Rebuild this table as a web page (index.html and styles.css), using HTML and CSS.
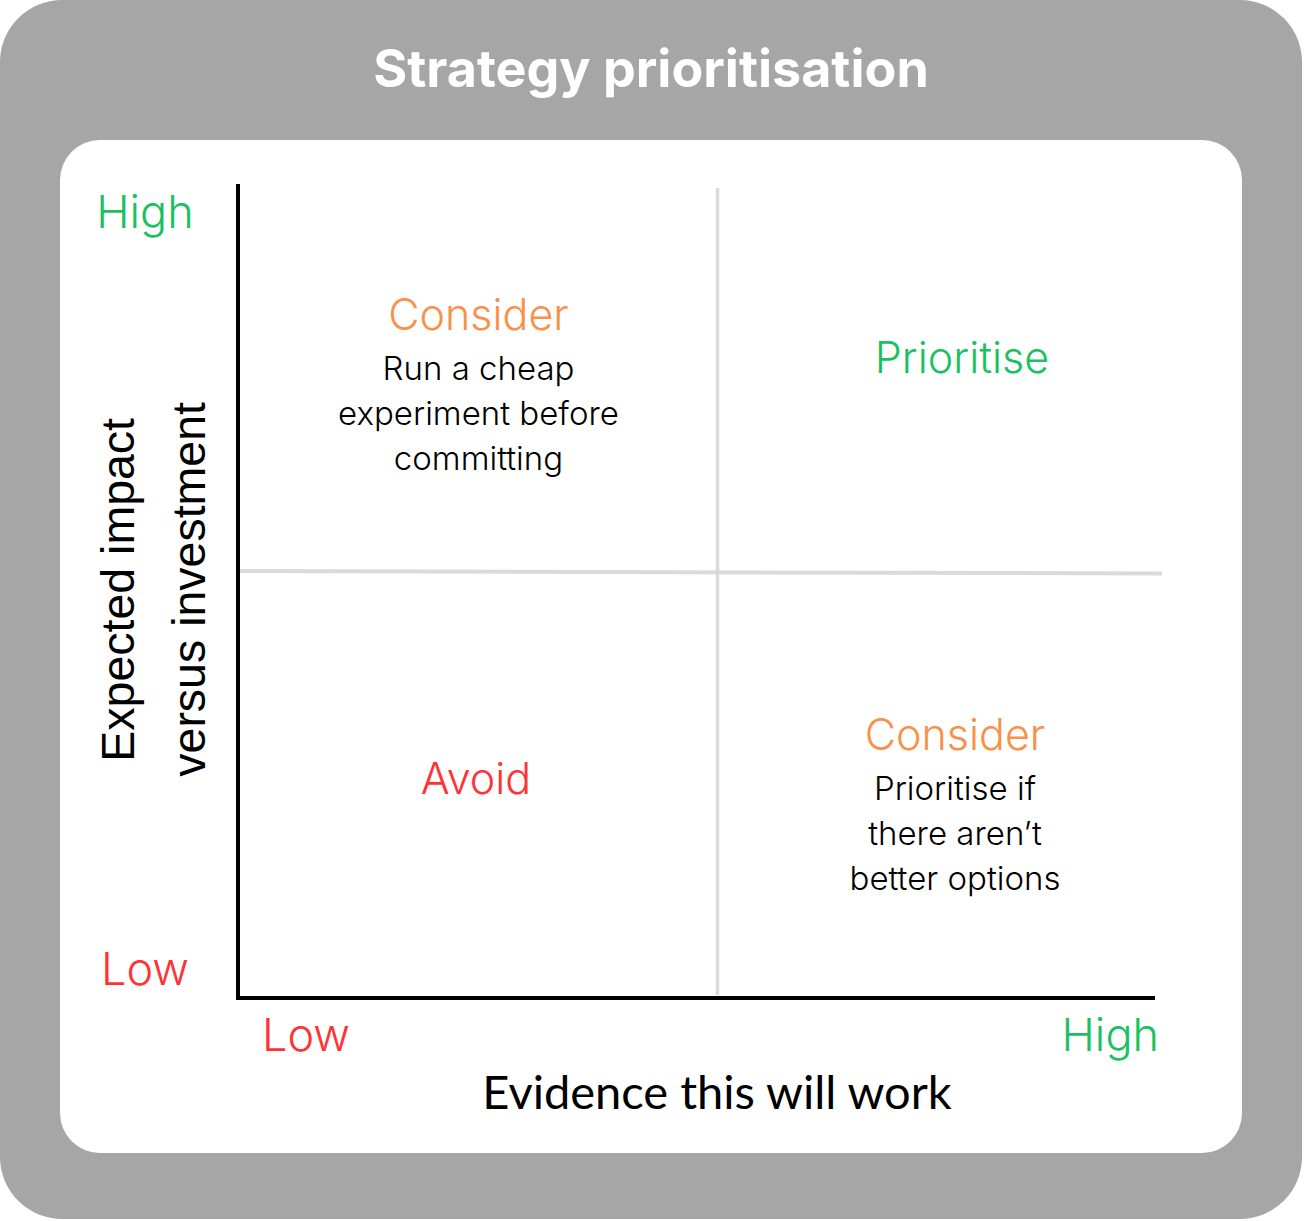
FILE: index.html
```html
<!DOCTYPE html>
<html lang="en">
<head>
<meta charset="utf-8">
<title>Strategy prioritisation</title>
<link rel="stylesheet" href="styles.css">
</head>
<body>
<div class="frame">
  <h1 class="title">Strategy prioritisation</h1>
  <div class="card">
    <div class="plot-row">
      <div class="y-side">
        <div class="lvl high y-high">High</div>
        <div class="y-label">
          <div class="y-text">
            <div class="y-line">Expected impact</div>
            <div class="y-line">versus investment</div>
          </div>
        </div>
        <div class="lvl low y-low">Low</div>
      </div>
      <div class="chart">
        <svg class="grid-lines" width="930" height="816" viewBox="0 0 930 816" aria-hidden="true">
          <line x1="477.5" y1="4" x2="477.5" y2="811" stroke="#dadada" stroke-width="3.5"/>
          <line x1="0" y1="387" x2="922" y2="389.5" stroke="#dadada" stroke-width="4"/>
        </svg>
        <div class="quad tl">
          <div class="q-head consider">Consider</div>
          <div class="q-sub">Run a cheap<br>experiment before<br>committing</div>
        </div>
        <div class="quad tr">
          <div class="q-head prioritise">Prioritise</div>
        </div>
        <div class="quad bl">
          <div class="q-head avoid">Avoid</div>
        </div>
        <div class="quad br">
          <div class="q-head consider">Consider</div>
          <div class="q-sub">Prioritise if<br>there aren’t<br>better options</div>
        </div>
      </div>
    </div>
    <div class="x-levels">
      <span class="lvl low">Low</span>
      <span class="lvl high">High</span>
    </div>
    <div class="x-label">Evidence this will work</div>
  </div>
</div>
</body>
</html>
```

FILE: styles.css
```css
html, body {
  margin: 0;
  padding: 0;
  background: #ffffff;
}

.frame {
  width: 1302px;
  height: 1219px;
  background: #a6a6a6;
  border-radius: 62px;
  box-sizing: border-box;
  padding: 0 60px;
  font-family: Inter, "Noto Sans", sans-serif;
}

.title {
  margin: 0;
  height: 140px;
  line-height: 137px;
  text-align: center;
  color: #ffffff;
  font-family: Inter, "Noto Sans", sans-serif;
  font-weight: 700;
  font-size: 52px;
}

.card {
  width: 1182px;
  height: 1013px;
  background: #ffffff;
  border-radius: 40px;
  box-sizing: border-box;
  padding-top: 44px;
}

.plot-row {
  display: flex;
}

.y-side {
  width: 176px;
  height: 816px;
  box-sizing: border-box;
  padding-right: 6px;
  display: flex;
  flex-direction: column;
  align-items: center;
}

.lvl {
  font-family: Inter, "Noto Sans", sans-serif;
  font-weight: 300;
  font-size: 45px;
  line-height: 45px;
}

.high { color: #19c160; }
.low { color: #fe3434; }

.y-high { margin-top: 5px; }
.y-low { margin-bottom: 9px; }

.y-label {
  flex: 1;
  display: flex;
  align-items: center;
  justify-content: center;
}

.y-text {
  writing-mode: vertical-rl;
  transform: rotate(180deg);
  font-family: "Liberation Sans", Arial, sans-serif;
  font-size: 46.5px;
  line-height: 71px;
  color: #000000;
  text-align: center;
  margin-left: 17px;
  margin-top: -2px;
  white-space: nowrap;
}

.chart {
  position: relative;
  width: 919px;
  height: 816px;
  box-sizing: border-box;
  border-left: 4px solid #000000;
  border-bottom: 4px solid #000000;
  display: grid;
  grid-template-columns: 477px 1fr;
  grid-template-rows: 387px 1fr;
}

.grid-lines {
  position: absolute;
  left: 0;
  top: 0;
  overflow: visible;
  pointer-events: none;
}

.quad {
  position: relative;
  display: flex;
  flex-direction: column;
  align-items: center;
  text-align: center;
  box-sizing: border-box;
}

.tl { padding-top: 98px; }
.tr { padding-top: 141px; padding-left: 52px; }
.bl { padding-top: 175px; padding-right: 5px; }
.br { padding-top: 131px; padding-left: 38px; }

.q-head {
  font-family: Inter, "Noto Sans", sans-serif;
  font-weight: 300;
  font-size: 43px;
  line-height: 64px;
}

.consider { color: #f8914a; }
.prioritise { color: #19c160; }
.avoid { color: #fe3434; }

.q-sub {
  font-family: Inter, "Noto Sans", sans-serif;
  font-weight: 300;
  font-size: 33px;
  line-height: 45px;
  color: #000000;
}

.x-levels {
  margin-left: 176px;
  width: 923px;
  box-sizing: border-box;
  padding-left: 26px;
  margin-top: 12px;
  display: flex;
  justify-content: space-between;
}

.x-label {
  margin-left: 176px;
  width: 919px;
  box-sizing: border-box;
  padding-left: 43px;
  margin-top: 9px;
  text-align: center;
  font-family: Lato, "Noto Sans", sans-serif;
  font-size: 47px;
  line-height: 50px;
  color: #000000;
}
```
